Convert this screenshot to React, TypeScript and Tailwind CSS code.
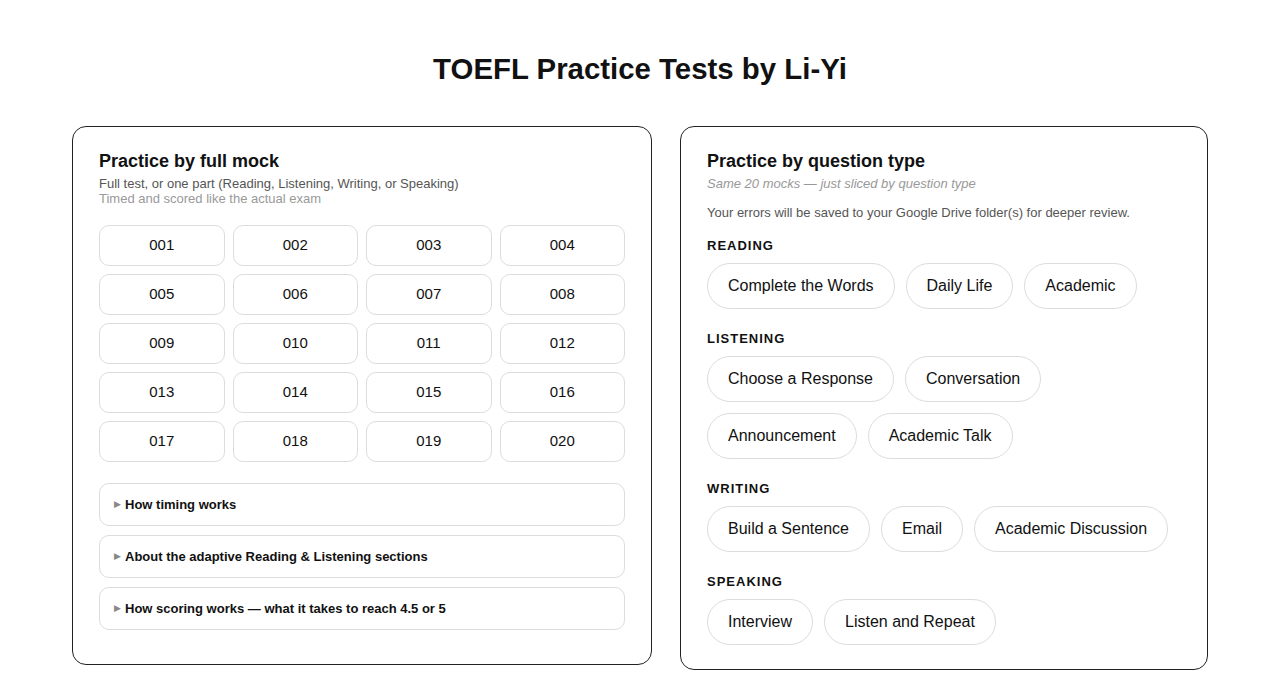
import React from 'react';

const mocks = Array.from({ length: 20 }, (_, i) => String(i + 1).padStart(3, '0'));

const faqs = [
  'How timing works',
  'About the adaptive Reading & Listening sections',
  'How scoring works — what it takes to reach 4.5 or 5',
];

const sections: { name: string; types: string[] }[] = [
  { name: 'Reading', types: ['Complete the Words', 'Daily Life', 'Academic'] },
  { name: 'Listening', types: ['Choose a Response', 'Conversation', 'Announcement', 'Academic Talk'] },
  { name: 'Writing', types: ['Build a Sentence', 'Email', 'Academic Discussion'] },
  { name: 'Speaking', types: ['Interview', 'Listen and Repeat'] },
];

export default function App() {
  return (
    <div className="min-h-screen bg-white text-[#111] font-['Liberation_Sans',Arial,sans-serif]">
      <div className="mx-auto max-w-[1136px] pt-[50px] pb-8">
        <h1 className="text-center text-[29.4px] font-bold leading-[38px] mb-[38px]">
          TOEFL Practice Tests by Li-Yi
        </h1>

        <div className="flex items-start gap-[28px]">
          {/* full mock */}
          <section className="w-[580px] shrink-0 rounded-[14px] border border-[#222] px-[26px] pt-[23px] pb-[34px]">
            <h2 className="text-[18px] font-bold leading-[22px]">Practice by full mock</h2>
            <p className="mt-[4px] text-[13px] leading-[15px] text-[#555]">
              Full test, or one part (Reading, Listening, Writing, or Speaking)
            </p>
            <p className="text-[13px] leading-[15px] text-[#999]">Timed and scored like the actual exam</p>

            <div className="mt-[19px] grid grid-cols-4 gap-[8px]">
              {mocks.map((m) => (
                <button
                  key={m}
                  className="h-[41px] rounded-[10px] border border-[#dcdcdc] bg-white text-[15px] text-[#111]"
                >
                  {m}
                </button>
              ))}
            </div>

            <div className="mt-[21px] flex flex-col gap-[9px]">
              {faqs.map((f) => (
                <div
                  key={f}
                  className="flex h-[43px] items-center gap-[4px] rounded-[10px] border border-[#dcdcdc] px-[14px]"
                >
                  <span className="text-[9px] text-[#888]">▶</span>
                  <span className="text-[13px] font-bold">{f}</span>
                </div>
              ))}
            </div>
          </section>

          {/* by question type */}
          <section className="flex-1 rounded-[14px] border border-[#222] px-[26px] pt-[23px] pb-[24px]">
            <h2 className="text-[18px] font-bold leading-[22px]">Practice by question type</h2>
            <p className="mt-[4px] text-[13px] italic leading-[15px] text-[#999]">
              Same 20 mocks — just sliced by question type
            </p>
            <p className="mt-[14px] text-[13px] leading-[15px] text-[#555]">
              Your errors will be saved to your Google Drive folder(s) for deeper review.
            </p>

            {sections.map((s, i) => (
              <div key={s.name} className={i === 0 ? 'mt-[18px]' : 'mt-[22px]'}>
                <h3 className="text-[13px] font-bold uppercase leading-[16px] tracking-[1px]">{s.name}</h3>
                <div className="mt-[9px] flex flex-wrap gap-x-[11px] gap-y-[11px]">
                  {s.types.map((t) => (
                    <button
                      key={t}
                      className="h-[46px] rounded-full border border-[#dcdcdc] bg-white px-[20px] text-[16px] text-[#111]"
                    >
                      {t}
                    </button>
                  ))}
                </div>
              </div>
            ))}
          </section>
        </div>
      </div>
    </div>
  );
}
